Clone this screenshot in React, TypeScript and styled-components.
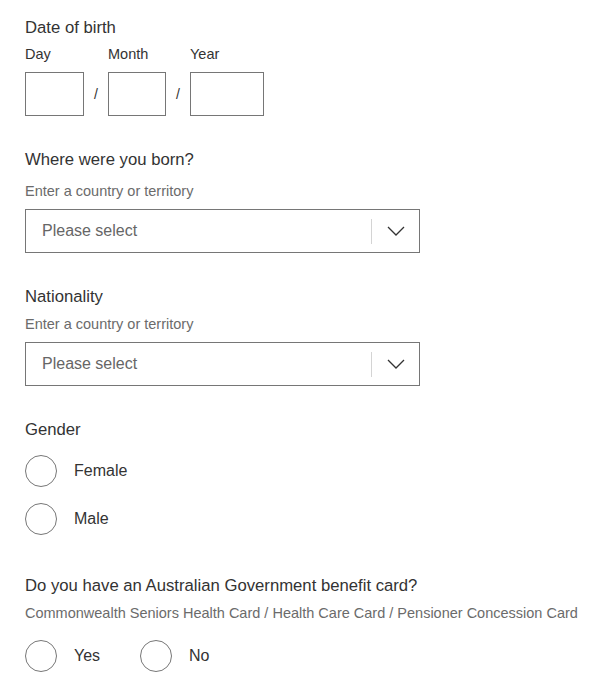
import React from "react";
import styled, { createGlobalStyle } from "styled-components";

const Global = createGlobalStyle`
  html, body { margin: 0; padding: 0; background: #fff; }
  body { font-family: "Liberation Sans", Arial, sans-serif; color: #333; }
`;

const Page = styled.div`
  padding: 16px 25px 0 25px;
  display: flex;
  flex-direction: column;
`;

const Section = styled.section<{ $mt?: number }>`
  margin-top: ${(p) => p.$mt ?? 0}px;
  display: flex;
  flex-direction: column;
`;

const Heading = styled.div`
  font-size: 16.7px;
  line-height: 24px;
  color: #333;
  white-space: nowrap;
`;

const Hint = styled.div<{ $mt?: number; $mb?: number }>`
  font-size: 14.5px;
  line-height: 20px;
  color: #6b6b6b;
  white-space: nowrap;
  margin-top: ${(p) => p.$mt ?? 0}px;
  margin-bottom: ${(p) => p.$mb ?? 0}px;
`;

const DateRow = styled.div`
  display: flex;
  align-items: flex-end;
  margin-top: 4px;
`;

const DateField = styled.label`
  display: flex;
  flex-direction: column;
  gap: 8px;
  font-size: 14.5px;
  line-height: 20px;
  color: #333;
`;

const DateBox = styled.input<{ $w: number }>`
  box-sizing: border-box;
  width: ${(p) => p.$w}px;
  height: 44px;
  border: 1px solid #767676;
  border-radius: 0;
  margin: 0;
  padding: 0 8px;
  font: inherit;
  outline: none;
`;

const Slash = styled.span`
  width: 24px;
  height: 44px;
  display: flex;
  align-items: center;
  justify-content: center;
  font-size: 14px;
  color: #333;
`;

const Select = styled.div`
  box-sizing: border-box;
  width: 395px;
  height: 44px;
  border: 1px solid #767676;
  display: flex;
  align-items: center;
`;

const Placeholder = styled.span`
  flex: 1;
  padding-left: 16px;
  font-size: 16px;
  color: #666;
`;

const Divider = styled.span`
  width: 1px;
  height: 25px;
  background: #d4d4d4;
`;

const Chevron = styled.span`
  width: 47px;
  display: flex;
  justify-content: center;
  align-items: center;
`;

const RadioGroup = styled.div<{ $dir: "row" | "column"; $gap: number; $mt: number }>`
  display: flex;
  flex-direction: ${(p) => p.$dir};
  gap: ${(p) => p.$gap}px;
  margin-top: ${(p) => p.$mt}px;
`;

const RadioOption = styled.label<{ $w?: number }>`
  display: flex;
  align-items: center;
  gap: 17px;
  font-size: 16px;
  color: #333;
  width: ${(p) => (p.$w ? `${p.$w}px` : "auto")};
`;

const Circle = styled.span`
  box-sizing: border-box;
  width: 32px;
  height: 32px;
  border-radius: 50%;
  border: 1px solid #777;
  flex: none;
`;

const Dropdown = ({ label, mt, hintMt }: { label: string; mt: number; hintMt: number }) => (
  <Section $mt={mt}>
    <Heading>{label}</Heading>
    <Hint $mt={hintMt} $mb={8}>Enter a country or territory</Hint>
    <Select>
      <Placeholder>Please select</Placeholder>
      <Divider />
      <Chevron>
        <svg width="18" height="10" viewBox="0 0 18 10" fill="none">
          <path d="M1 1l8 8 8-8" stroke="#333" strokeWidth="1.3" />
        </svg>
      </Chevron>
    </Select>
  </Section>
);

export default function App() {
  return (
    <>
      <Global />
      <Page>
        <Section>
          <Heading>Date of birth</Heading>
          <DateRow>
            <DateField>
              Day
              <DateBox $w={59} />
            </DateField>
            <Slash>/</Slash>
            <DateField>
              Month
              <DateBox $w={58} />
            </DateField>
            <Slash>/</Slash>
            <DateField>
              Year
              <DateBox $w={74} />
            </DateField>
          </DateRow>
        </Section>

        <Dropdown label="Where were you born?" mt={32} hintMt={9} />
        <Dropdown label="Nationality" mt={32} hintMt={5} />

        <Section $mt={32}>
          <Heading>Gender</Heading>
          <RadioGroup $dir="column" $gap={16} $mt={13}>
            <RadioOption>
              <Circle />
              Female
            </RadioOption>
            <RadioOption>
              <Circle />
              Male
            </RadioOption>
          </RadioGroup>
        </Section>

        <Section $mt={39}>
          <Heading>Do you have an Australian Government benefit card?</Heading>
          <Hint $mt={5}>Commonwealth Seniors Health Card / Health Care Card / Pensioner Concession Card</Hint>
          <RadioGroup $dir="row" $gap={0} $mt={17}>
            <RadioOption $w={115}>
              <Circle />
              Yes
            </RadioOption>
            <RadioOption>
              <Circle />
              No
            </RadioOption>
          </RadioGroup>
        </Section>
      </Page>
    </>
  );
}
